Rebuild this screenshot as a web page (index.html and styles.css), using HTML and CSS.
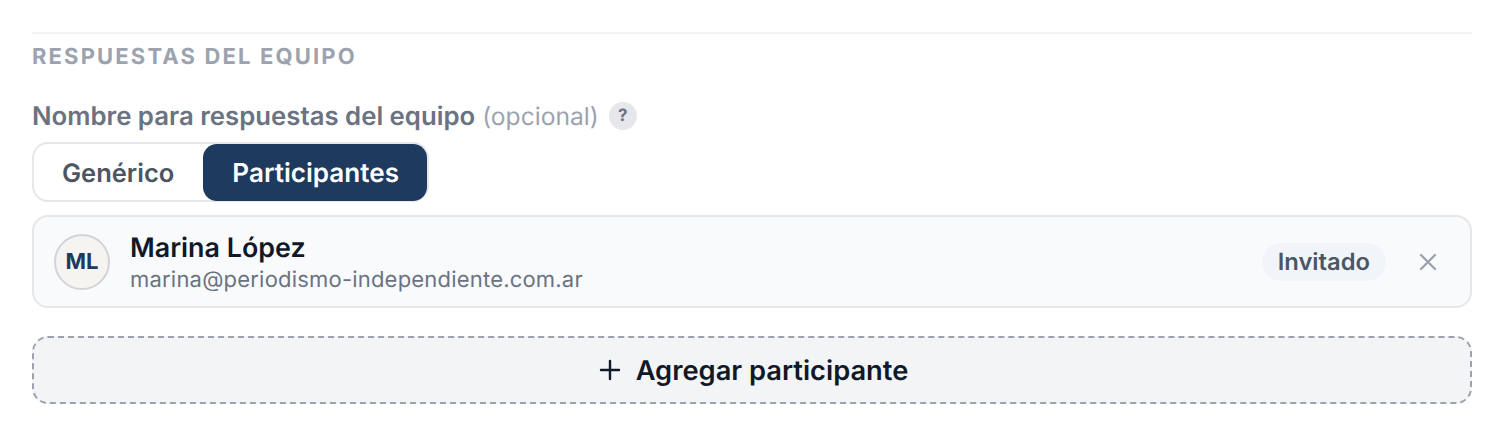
FILE: index.html
```html
<!DOCTYPE html>
<html lang="es">
<head>
<meta charset="utf-8">
<title>Respuestas del equipo</title>
<link rel="stylesheet" href="styles.css">
</head>
<body>
<section class="section">
  <h2 class="heading">RESPUESTAS DEL EQUIPO</h2>
  <div class="label-row">
    <span class="label">Nombre para respuestas del equipo</span>
    <span class="optional">(opcional)</span>
    <span class="help">?</span>
  </div>
  <div class="toggle">
    <button class="toggle-btn">Genérico</button>
    <button class="toggle-btn active">Participantes</button>
  </div>
  <div class="card">
    <div class="avatar">ML</div>
    <div class="info">
      <div class="name">Marina López</div>
      <div class="email">marina@periodismo-independiente.com.ar</div>
    </div>
    <span class="badge">Invitado</span>
    <svg class="close" width="20" height="20" viewBox="0 0 20 20" fill="none"><path d="M3 3L17 17M17 3L3 17" stroke="#9ca3af" stroke-width="2.4" stroke-linecap="round"/></svg>
  </div>
  <button class="add">
    <svg class="plus" width="24" height="24" viewBox="0 0 24 24" fill="none"><path d="M12 3V21M3 12H21" stroke="#111827" stroke-width="2.4" stroke-linecap="round"/></svg>
    <span>Agregar participante</span>
  </button>
</section>
</body>
</html>
```
FILE: styles.css
```css
* { box-sizing: border-box; }
html, body { margin: 0; padding: 0; background: #fff; }
body { font-family: Inter, "Liberation Sans", sans-serif; width: 1504px; height: 436px; overflow: hidden; text-rendering: geometricPrecision; }
.section { margin: 32px 32px 0; border-top: 2px solid #f3f4f6; display: flex; flex-direction: column; }
.heading { margin: 9px 0 0; font-size: 22px; line-height: 28px; font-weight: 700; letter-spacing: 2.15px; color: #9ca3af; }
.label-row { display: flex; align-items: center; margin-top: 29px; height: 32px; font-size: 25.75px; }
.label { font-weight: 600; color: #6b7280; }
.optional { margin-left: 7px; color: #9ca3af; font-weight: 400; font-size: 24.6px; }
.help { margin-left: 10px; width: 28px; height: 28px; border-radius: 50%; background: #e5e7eb; color: #6b7280; font-size: 17px; font-weight: 700; display: flex; align-items: center; justify-content: center; }
.toggle { display: inline-flex; align-self: flex-start; margin-top: 10px; border: 2px solid #e5e7eb; border-radius: 16px; background: #fff; height: 60px; }
.toggle-btn { font-family: inherit; font-size: 25.5px; font-weight: 600; border: 0; background: none; color: #4b5563; padding: 2px 29px 0 28px; border-radius: 14px; height: 57px; text-rendering: geometricPrecision; }
.toggle-btn.active { background: #1e3a5f; color: #fff; font-size: 26.1px; padding: 2px 28px 0 29px; }
.card { display: flex; align-items: center; margin-top: 13px; height: 93px; padding: 0 32px 0 20px; background: #f9fafc; border: 2px solid #e5e7eb; border-radius: 16px; }
.avatar { width: 56px; height: 56px; border-radius: 50%; background: #f5f4f1; border: 2px solid #d1d5db; color: #1e3a5f; font-size: 22px; font-weight: 700; display: flex; align-items: center; justify-content: center; }
.info { margin-left: 20px; flex: 1; display: flex; flex-direction: column; gap: 1px; padding-top: 1px; }
.name { font-size: 26.85px; line-height: 34px; font-weight: 600; color: #111827; }
.email { font-size: 22px; line-height: 28px; color: #6b7280; letter-spacing: 0.2px; }
.badge { height: 38px; padding: 0 16px; border-radius: 19px; background: #f1f5f9; color: #4b5563; font-size: 23.75px; font-weight: 600; display: flex; align-items: center; }
.close { margin-left: 32px; }
.add { margin-top: 28px; height: 68px; width: 100%; display: flex; align-items: center; justify-content: center; gap: 14px; padding: 0 0 0 2px; font-family: inherit; font-size: 27.3px; font-weight: 600; color: #111827; background: #f3f4f6; border: 2px dashed #9ca3af; border-radius: 16px; text-rendering: geometricPrecision; }
.plus { flex: none; }
```
